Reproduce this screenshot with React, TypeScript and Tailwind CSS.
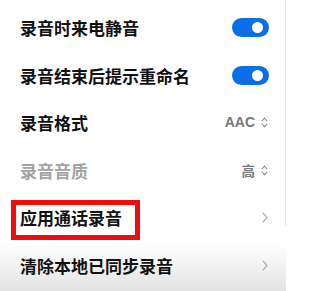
const font = { fontFamily: '"Noto Sans CJK SC", "Noto Sans", sans-serif' };

function Toggle() {
  return (
    <div className="flex h-[19px] w-[37px] items-center justify-end rounded-full bg-[#0a6fe6] pr-[6px]">
      <div className="h-[11px] w-[11px] rounded-full bg-white" />
    </div>
  );
}

function UpDown() {
  return (
    <svg width="7" height="11" viewBox="0 0 7 11" fill="none" stroke="#8a8a8a" strokeWidth="1.1" strokeLinecap="round" strokeLinejoin="round">
      <path d="M1 4 L3.5 1.2 L6 4" />
      <path d="M1 7 L3.5 9.8 L6 7" />
    </svg>
  );
}

function Chevron() {
  return (
    <svg width="6" height="11" viewBox="0 0 6 11" fill="none" stroke="#9a9a9a" strokeWidth="1.1" strokeLinecap="round" strokeLinejoin="round">
      <path d="M1 1 L5 5.5 L1 10" />
    </svg>
  );
}

export default function App() {
  return (
    <div
      className="relative h-[291px] w-[286px] overflow-hidden bg-linear-to-b from-white from-[84%] to-[#e3e3e3] pt-[4px]"
      style={font}
    >
      {/* thin scroll edge on the right */}
      <div className="absolute right-0 top-0 h-[226px] w-px bg-[#e6e6e6]" />

      <div className="flex h-[47.5px] items-center justify-between pl-[20px] pr-[17px]">
        <span className="text-[17px] font-bold text-[#111]">录音时来电静音</span>
        <Toggle />
      </div>

      <div className="flex h-[47.5px] items-center justify-between pl-[20px] pr-[17px]">
        <span className="text-[17px] font-bold text-[#111]">录音结束后提示重命名</span>
        <Toggle />
      </div>

      <div className="flex h-[47.5px] items-center justify-between pl-[20px] pr-[18px]">
        <span className="text-[17px] font-bold text-[#111]">录音格式</span>
        <div className="flex items-center gap-[6px]">
          <span className="text-[14px] font-bold text-[#777]" style={{ fontFamily: '"Liberation Sans", Arial, sans-serif' }}>AAC</span>
          <UpDown />
        </div>
      </div>

      <div className="flex h-[47.5px] items-center justify-between pl-[20px] pr-[18px]">
        <span className="text-[17px] font-bold text-[#a3a3a3]">录音音质</span>
        <div className="flex items-center gap-[6px]">
          <span className="text-[13.5px] font-bold text-[#777]">高</span>
          <UpDown />
        </div>
      </div>

      <div className="relative flex h-[47.5px] items-center justify-between pl-[20px] pr-[18px]">
        <span className="text-[17px] font-bold text-[#111]">应用通话录音</span>
        <Chevron />
        {/* red highlight box */}
        <div className="absolute left-[11px] top-[6px] h-[40px] w-[129px] border-[5.5px] border-[#f00c0c]" />
      </div>

      <div className="flex h-[47.5px] items-center justify-between pl-[20px] pr-[18px]">
        <span className="text-[17px] font-bold text-[#111]">清除本地已同步录音</span>
        <Chevron />
      </div>
    </div>
  );
}
